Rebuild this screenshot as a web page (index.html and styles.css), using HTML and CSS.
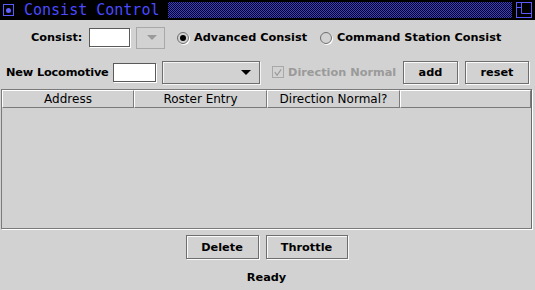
FILE: index.html
```html
<!DOCTYPE html>
<html>
<head>
<meta charset="utf-8">
<link rel="stylesheet" href="styles.css">
</head>
<body>
<div class="window">
  <div class="titlebar">
    <div class="menu-icon"><span class="dot"></span></div>
    <div class="title">Consist Control</div>
    <div class="grip"></div>
    <div class="max-icon">
      <svg width="16" height="16" viewBox="0 0 16 16"><rect x="0.5" y="0.5" width="15" height="15" fill="none" stroke="#5a5aff"/><path d="M5.5 1v10.5H15M1 5.5h4.5" fill="none" stroke="#5a5aff"/></svg>
    </div>
  </div>

  <div class="row row1">
    <span class="label lc">Consist:</span>
    <span class="field f1"></span>
    <span class="combo disabled c1"><span class="arrow"></span></span>
    <span class="radio-item ri1"><span class="radio on"></span><span class="label">Advanced Consist</span></span>
    <span class="radio-item"><span class="radio"></span><span class="label">Command Station Consist</span></span>
  </div>

  <div class="row row2">
    <span class="label ln">New Locomotive</span>
    <span class="field f2"></span>
    <span class="combo c2"><span class="arrow dark"></span></span>
    <span class="check-item"><span class="check"><svg width="11" height="11" viewBox="0 0 11 11"><path d="M2 5l2.5 3.5L9 2" fill="none" stroke="#9a9a9a" stroke-width="1.3"/></svg></span><span class="label dim">Direction Normal</span></span>
    <span class="btn add">add</span>
    <span class="btn reset">reset</span>
  </div>

  <div class="table">
    <div class="thead">
      <div class="th">Address</div>
      <div class="th">Roster Entry</div>
      <div class="th">Direction Normal?</div>
      <div class="th"></div>
    </div>
    <div class="tbody"></div>
  </div>

  <div class="row buttons">
    <span class="btn del">Delete</span>
    <span class="btn thr">Throttle</span>
  </div>

  <div class="status">Ready</div>
</div>
</body>
</html>
```
FILE: styles.css
```css
* { box-sizing: border-box; }
html, body { margin: 0; padding: 0; }
body {
  width: 535px;
  height: 290px;
  background: #d2d2d2;
  font-family: "DejaVu Sans", sans-serif;
  font-size: 12px;
  color: #000;
  overflow: hidden;
}
.window { width: 535px; height: 290px; display: flex; flex-direction: column; }

.titlebar {
  height: 20px;
  background: #000;
  display: flex;
  align-items: center;
  padding: 0 3px 0 3px;
}
.menu-icon {
  width: 11px; height: 12px;
  border: 1px solid #5a5aff;
  display: flex; align-items: center; justify-content: center;
}
.menu-icon .dot { width: 5px; height: 5px; border-radius: 50%; background: #6060ff; }
.title {
  font-family: "DejaVu Sans Mono", monospace;
  font-size: 15px;
  color: #4a4aff;
  margin-left: 10px;
  line-height: 20px;
}
.grip {
  flex: 1;
  height: 16px;
  margin: 0 4px 0 9px;
  background-image: repeating-conic-gradient(#3c3cd2 0 25%, #000010 0 50%);
  background-size: 2px 2px;
}
.max-icon { width: 16px; height: 16px; display: flex; }

.row { display: flex; align-items: center; }
.label { font-weight: bold; white-space: nowrap; font-size: 11.3px; }
.dim { color: #9a9a9a; }

.row1 { height: 35px; padding-left: 31px; padding-top: 0; }
.lc { width: 53px; margin-right: 5px; }
.field {
  display: inline-block;
  background: #fff;
  border: 1px solid #5a5a5a;
  box-shadow: 1px 1px 0 #fff;
}
.f1 { width: 41px; height: 19px; margin-right: 6px; }
.combo {
  display: inline-flex;
  align-items: center;
  justify-content: flex-end;
  border: 1px solid #6e6e6e;
  box-shadow: inset 1px 1px 0 #f4f4f4, 1px 1px 0 #f4f4f4;
  background: #d2d2d2;
}
.combo.disabled { border-color: #a8a8a8; box-shadow: none; }
.c1 { width: 29px; height: 22px; margin-right: 12px; padding-right: 7px; }
.arrow {
  width: 0; height: 0;
  border-left: 5px solid transparent;
  border-right: 5px solid transparent;
  border-top: 5px solid #9a9a9a;
}
.arrow.dark { border-top-color: #000; }
.radio-item { display: inline-flex; align-items: center; }
.ri1 { margin-right: 13px; }
.radio {
  width: 12px; height: 12px; border-radius: 50%;
  border: 1px solid #6e6e6e;
  background: #d2d2d2;
  box-shadow: 1px 1px 0 #fff;
  margin-right: 5px;
  display: inline-flex; align-items: center; justify-content: center;
}
.radio.on::after { content: ""; width: 6px; height: 6px; border-radius: 50%; background: #000; }

.row2 { height: 33px; padding-left: 6px; padding-top: 1px; }
.ln { width: 104px; margin-right: 3px; letter-spacing: -0.15px; }
.f2 { width: 43px; height: 19px; margin-right: 6px; }
.c2 { width: 98px; height: 23px; margin-right: 12px; padding-right: 8px; }
.check-item { display: inline-flex; align-items: center; width: 131px; }
.check {
  width: 12px; height: 12px;
  border: 1px solid #a8a8a8;
  margin-right: 4px;
  display: inline-flex; align-items: center; justify-content: center;
}
.btn {
  display: inline-flex; align-items: center; justify-content: center;
  height: 23px;
  border: 1px solid #6e6e6e;
  box-shadow: inset 1px 1px 0 #fafafa, 1px 1px 0 #fafafa;
  font-weight: bold;
  font-size: 11.3px;
  background: #d2d2d2;
}
.add { width: 55px; margin-right: 7px; }
.reset { width: 64px; }

.table {
  margin: 1px 3px 0 1px;
  height: 140px;
  border: 1px solid #7a7a7a;
  border-right-color: #6a6a6a;
  box-shadow: 1px 1px 0 #fff;
  display: flex; flex-direction: column;
}
.thead { display: grid; grid-template-columns: 132px 133px 133px 1fr; height: 18px; }
.th {
  border: 1px solid #7a7a7a;
  border-left-color: #fff;
  border-top-color: #fff;
  text-align: center;
  line-height: 16px;
  font-size: 12px;
  font-weight: normal;
  white-space: nowrap;
  overflow: hidden;
}
.tbody { flex: 1; }

.buttons { justify-content: center; gap: 7px; margin-top: 6px; padding-right: 2px; }
.del { width: 73px; height: 24px; }
.thr { width: 82px; height: 24px; }

.status {
  text-align: center;
  font-weight: bold;
  font-size: 11.3px;
  margin-top: 11px;
  line-height: 16px;
  padding-right: 2px;
}
```
